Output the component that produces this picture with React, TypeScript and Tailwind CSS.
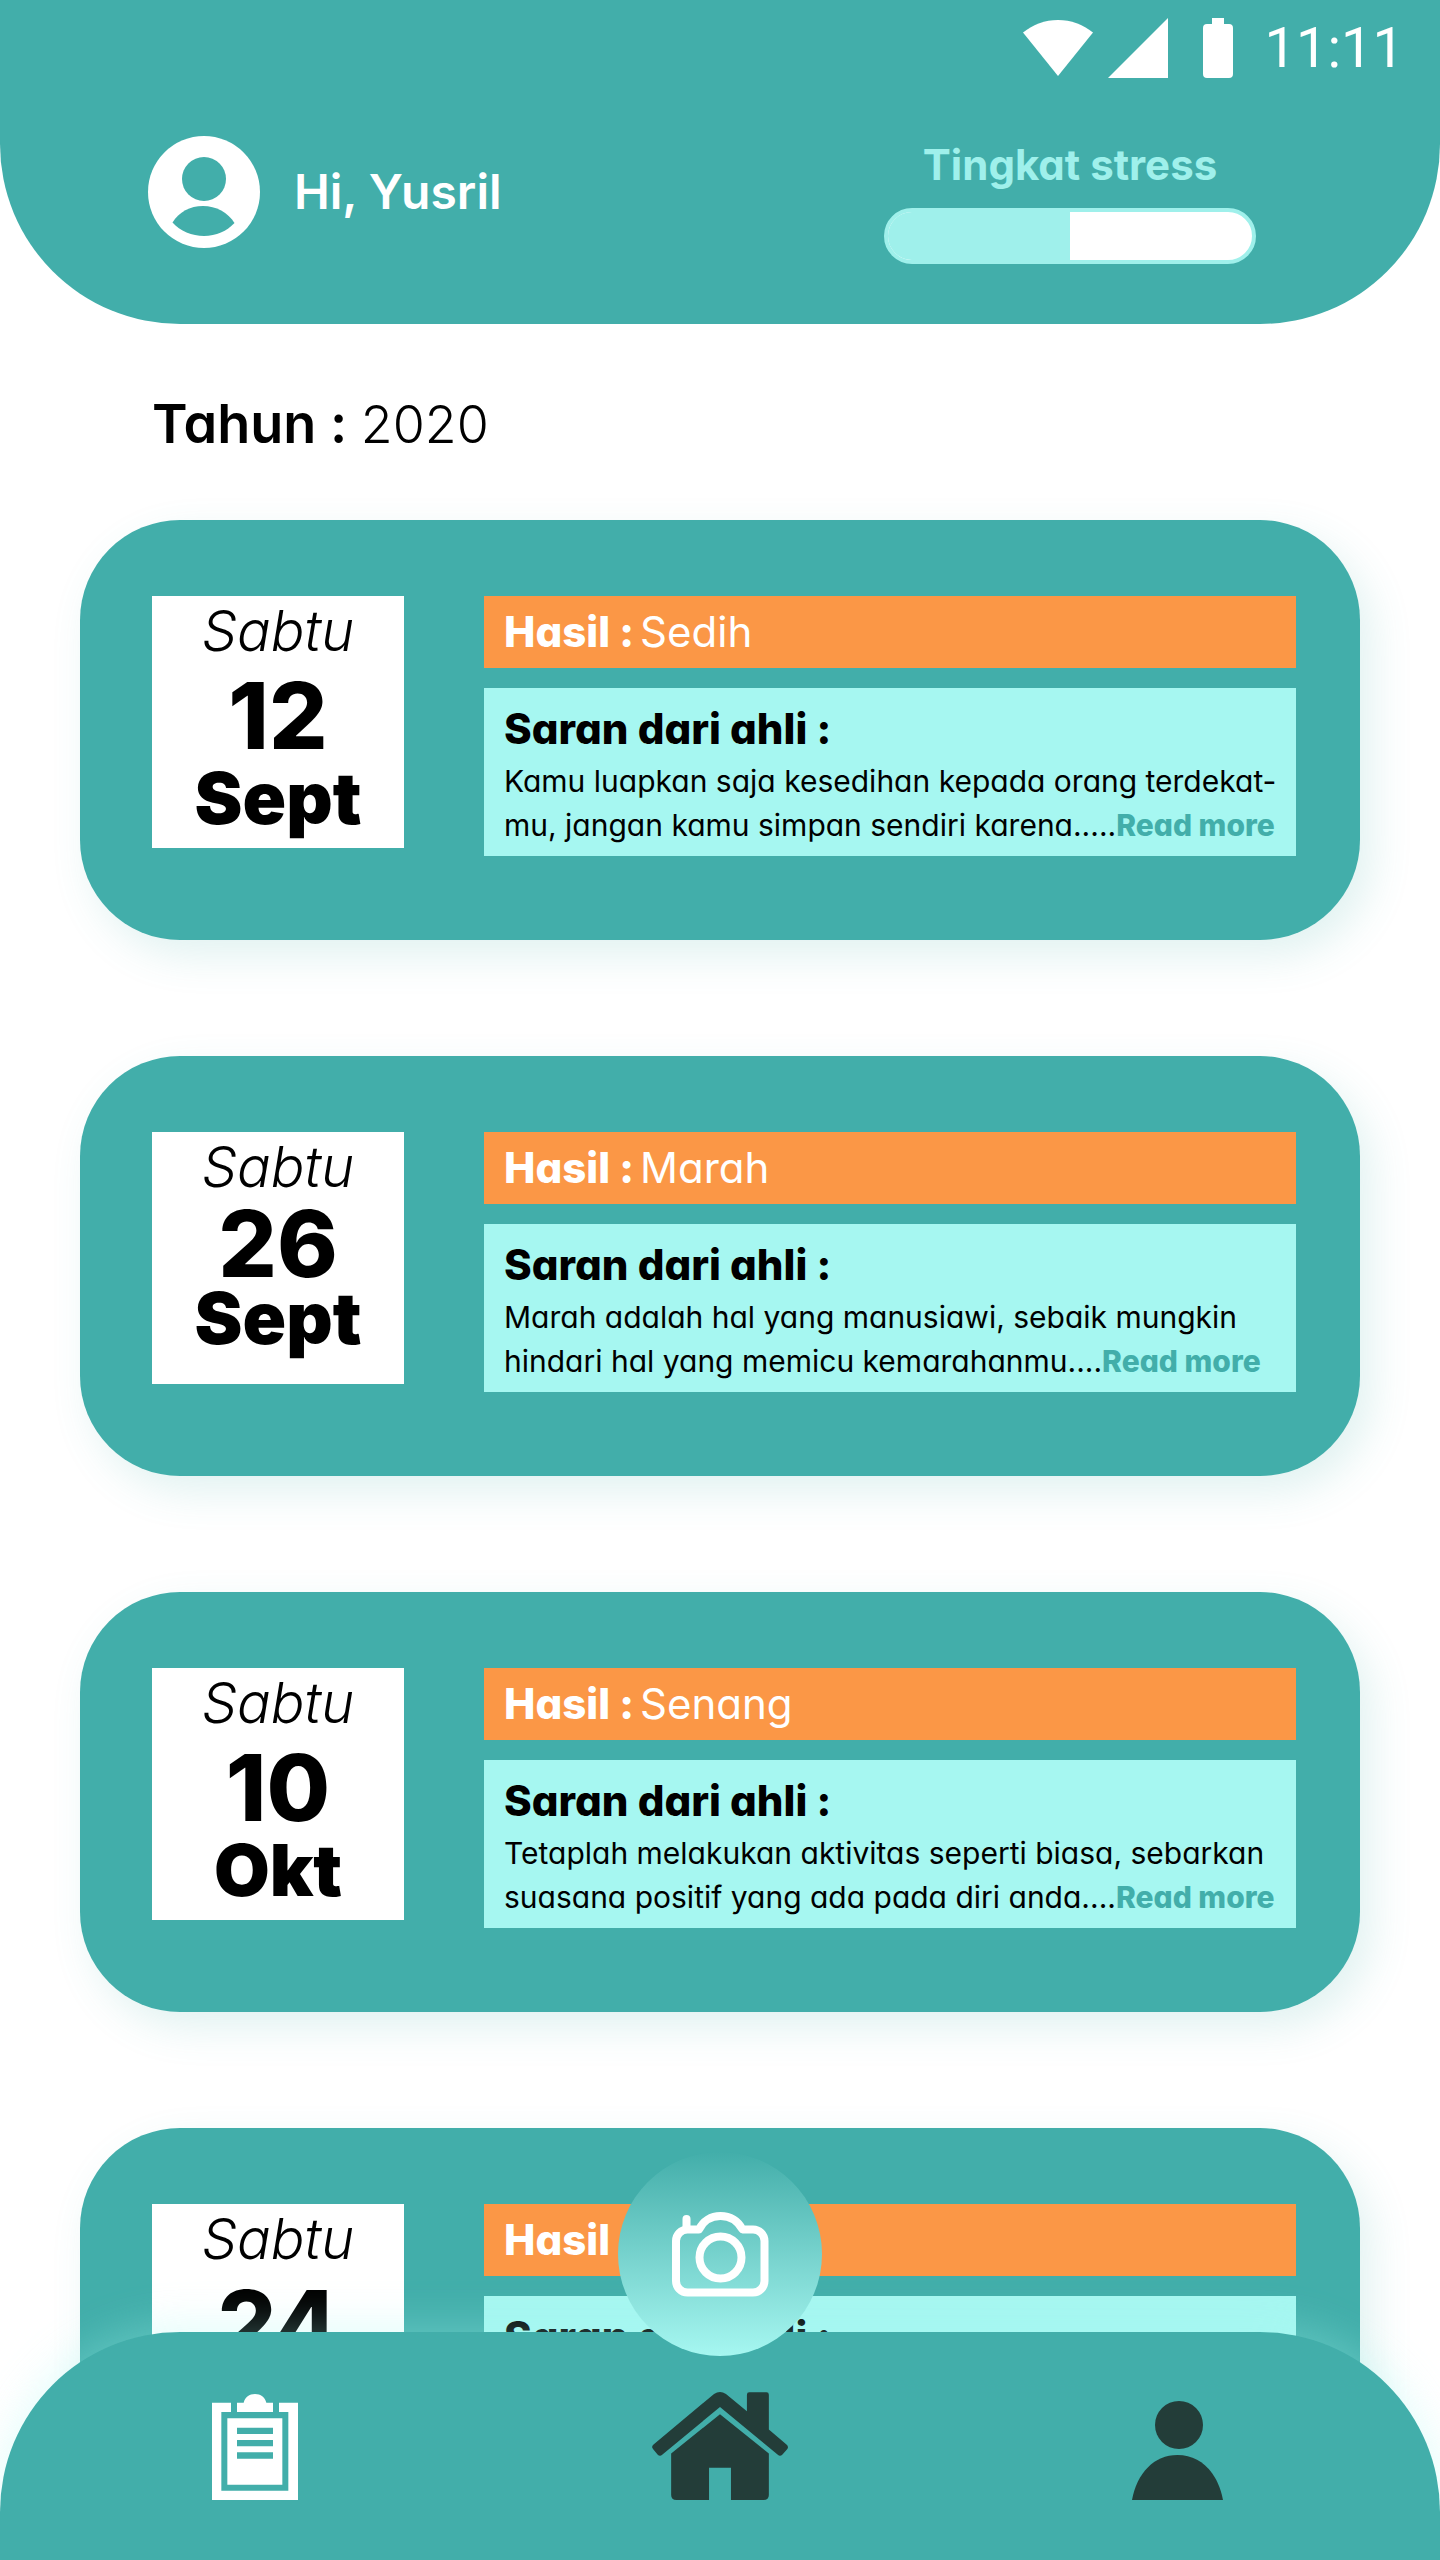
import type { ReactNode } from "react";

type Entry = {
  day: string;
  date: string;
  month: string;
  result: string;
  advice: [string, string];
  compact?: boolean;
};

const entries: Entry[] = [
  {
    day: "Sabtu",
    date: "12",
    month: "Sept",
    result: "Sedih",
    advice: ["Kamu luapkan saja kesedihan kepada orang terdekat-", "mu, jangan kamu simpan sendiri karena....."],
  },
  {
    day: "Sabtu",
    date: "26",
    month: "Sept",
    result: "Marah",
    advice: ["Marah adalah hal yang manusiawi, sebaik mungkin", "hindari hal yang memicu kemarahanmu...."],
    compact: true,
  },
  {
    day: "Sabtu",
    date: "10",
    month: "Okt",
    result: "Senang",
    advice: ["Tetaplah melakukan aktivitas seperti biasa, sebarkan", "suasana positif yang ada pada diri anda...."],
  },
  {
    day: "Sabtu",
    date: "24",
    month: "Okt",
    result: "Senang",
    advice: ["Tetaplah melakukan aktivitas seperti biasa, sebarkan", "suasana positif yang ada pada diri anda...."],
  },
];

function StatusBar() {
  return (
    <div className="flex h-[60px] items-center justify-end pr-9 text-white">
      <svg className="mr-[15px] h-14 w-[70px]" viewBox="0 0 70 56" fill="currentColor" aria-hidden="true">
        <path d="M35 56 0 12.5C10 4.500 22 0 35 0s25 4.500 35 12.500Z" />
      </svg>
      <svg className="mr-[35px] size-[60px]" viewBox="0 0 60 60" fill="currentColor" aria-hidden="true">
        <path d="M60 0v60H0Z" />
      </svg>
      <svg className="mr-8 h-[60px] w-[30px]" viewBox="0 0 30 60" fill="currentColor" aria-hidden="true">
        <path d="M9 0h12v6h5a4 4 0 0 1 4 4v46a4 4 0 0 1-4 4H4a4 4 0 0 1-4-4V10a4 4 0 0 1 4-4h5Z" />
      </svg>
      <time className="font-['Roboto',sans-serif] text-[56px] leading-[60px] font-normal">11:11</time>
    </div>
  );
}

function Avatar() {
  return (
    <svg className="size-28 shrink-0" viewBox="0 0 112 112" aria-hidden="true">
      <circle cx="56" cy="56" r="56" fill="#fff" />
      <circle cx="56" cy="43" r="22" fill="#42aeaa" />
      <path d="M24.500 86.500C31 76 42 70 55 70s25 6.500 31.500 17C79 95 68 100 56 100s-24-5-31.500-13.500Z" fill="#42aeaa" />
    </svg>
  );
}

function Header() {
  return (
    <header className="rounded-b-[180px] bg-[#42aeaa] pt-[18px] pb-[60px]">
      <StatusBar />
      <div className="mt-[58px] flex items-start justify-between pr-[184px] pl-[148px]">
        <div className="flex items-center gap-[34px]">
          <Avatar />
          <p className="text-[48px] leading-[60px] font-semibold text-white">Hi, Yusril</p>
        </div>
        <div className="w-[372px]">
          <p id="stress" className="text-center text-[42px] leading-[58px] font-bold text-[#9ff0eb]">
            Tingkat stress
          </p>
          <div
            role="progressbar"
            aria-labelledby="stress"
            aria-valuenow={50}
            aria-valuemin={0}
            aria-valuemax={100}
            className="mt-[14px] h-14 overflow-hidden rounded-full border-4 border-[#9ff0eb] bg-white"
          >
            <div className="h-full w-1/2 bg-[#9ff0eb]" />
          </div>
        </div>
      </div>
    </header>
  );
}

function EntryCard({ entry }: { entry: Entry }) {
  return (
    <li className="flex min-h-[420px] items-start gap-20 rounded-[100px] bg-[#42aeaa] pt-[76px] pr-16 pb-[84px] pl-[72px] shadow-[12px_16px_40px_rgba(66,174,170,0.16)]">
      <div className="h-[252px] w-[252px] shrink-0 bg-white text-center text-black">
        <p className="text-[56px] leading-[70px] font-light italic">{entry.day}</p>
        <p className={entry.compact ? "text-[92px] leading-[84px] font-extrabold" : "text-[92px] leading-[100px] font-extrabold"}>
          {entry.date}
        </p>
        <p className="text-[72px] leading-[64px] font-black">{entry.month}</p>
      </div>
      <div className="flex min-w-0 flex-1 flex-col gap-5">
        <p className="flex gap-1.5 bg-[#fb9746] px-5 text-[42px] leading-[72px] text-white">
          <b className="font-extrabold">Hasil :</b>
          <span>{entry.result}</span>
        </p>
        <section className="bg-[#a6f7f1] px-5 pt-[11px] pb-[9px] text-black">
          <h2 className="text-[42px] leading-[60px] font-extrabold">Saran dari ahli :</h2>
          <p className="text-[30px] leading-[44px] whitespace-nowrap">
            {entry.advice[0]}
            <br />
            {entry.advice[1]}
            <a href="#detail" className="font-extrabold text-[#42aeaa]">
              Read more
            </a>
          </p>
        </section>
      </div>
    </li>
  );
}

function NavLink({ href, label, children }: { href: string; label: string; children: ReactNode }) {
  return (
    <a href={href} aria-label={label}>
      {children}
    </a>
  );
}

function BottomNav() {
  return (
    <nav className="fixed inset-x-0 bottom-0 flex h-[228px] items-end justify-between rounded-t-[180px] bg-[#42aeaa] pr-[217px] pb-[60px] pl-[212px] shadow-[0_-8px_40px_rgba(166,247,241,0.3)]">
      <button
        type="button"
        aria-label="Kamera"
        className="absolute -top-[180px] left-1/2 flex size-[204px] -translate-x-1/2 items-center justify-center rounded-full bg-linear-to-b from-[#42aeaa] to-[#a6f7f1]"
      >
        <svg
          className="h-[85px] w-[97px]"
          viewBox="0 0 97 85"
          fill="none"
          stroke="#fff"
          strokeWidth="8"
          strokeLinecap="round"
          strokeLinejoin="round"
          aria-hidden="true"
        >
          <path d="M27 17.500H15.500A11.500 11.500 0 0 0 4 29v40a11.500 11.500 0 0 0 11.500 11.500h65.500A11.500 11.500 0 0 0 92.500 69V29A11.500 11.500 0 0 0 81 17.500H70.500C66 9 58 4 48.500 4S31 9 27 17.500Z" />
          <path d="M14.500 17V7" />
          <circle cx="48.500" cy="45.500" r="21" />
        </svg>
      </button>
      <NavLink href="#riwayat" label="Riwayat">
        <svg className="h-[106px] w-[96px]" viewBox="0 0 288 318" fill="#fff" aria-hidden="true">
          <path d="M0 26h57v28H28v236h201V54h-28V26h57v292H0Z" />
          <path d="M75 54V26h20C99 10 112 0 129 0s30 10 34 26h20v28Z" />
          <path fillRule="evenodd" d="M46 73h165v199H46ZM75 101v19h108v-19ZM75 138v19h108v-19ZM75 175v19h108v-19Z" />
        </svg>
      </NavLink>
      <NavLink href="#beranda" label="Beranda">
        <svg className="h-[108px] w-[136px]" viewBox="0 0 408 325" fill="#233d39" aria-hidden="true">
          <path d="M186 6Q204-6 222 6L285 58V8q0-7 7-7h52q7 0 7 7v105l53 45q8 7 2 14l-14 16q-7 7-14 1L204 45 30 189q-7 6-14-1L3 172q-7-7 1-14Z" />
          <path d="m204 67 147 118v125q0 15-16 15H237v-97h-66v97H73q-16 0-16-15V185Z" />
        </svg>
      </NavLink>
      <NavLink href="#profil" label="Profil">
        <svg className="h-[99px] w-[91px]" viewBox="0 0 91 99" fill="#233d39" aria-hidden="true">
          <circle cx="47" cy="24" r="24" />
          <path d="M0 99C5 72 22 54 45.500 54S86 72 91 99Z" />
        </svg>
      </NavLink>
    </nav>
  );
}

export default function App() {
  return (
    <div className="min-h-screen bg-white font-['Inter',sans-serif] [font-feature-settings:'cv11']">
      <Header />
      <main className="px-20 pt-16">
        <h1 className="pl-[72px] text-[54px] leading-[72px] font-semibold text-black">
          Tahun : <span className="text-[52px] leading-none font-light">2020</span>
        </h1>
        <ul className="mt-[60px] flex flex-col gap-[116px]">
          {entries.map((entry, i) => (
            <EntryCard key={i} entry={entry} />
          ))}
        </ul>
      </main>
      <BottomNav />
    </div>
  );
}
